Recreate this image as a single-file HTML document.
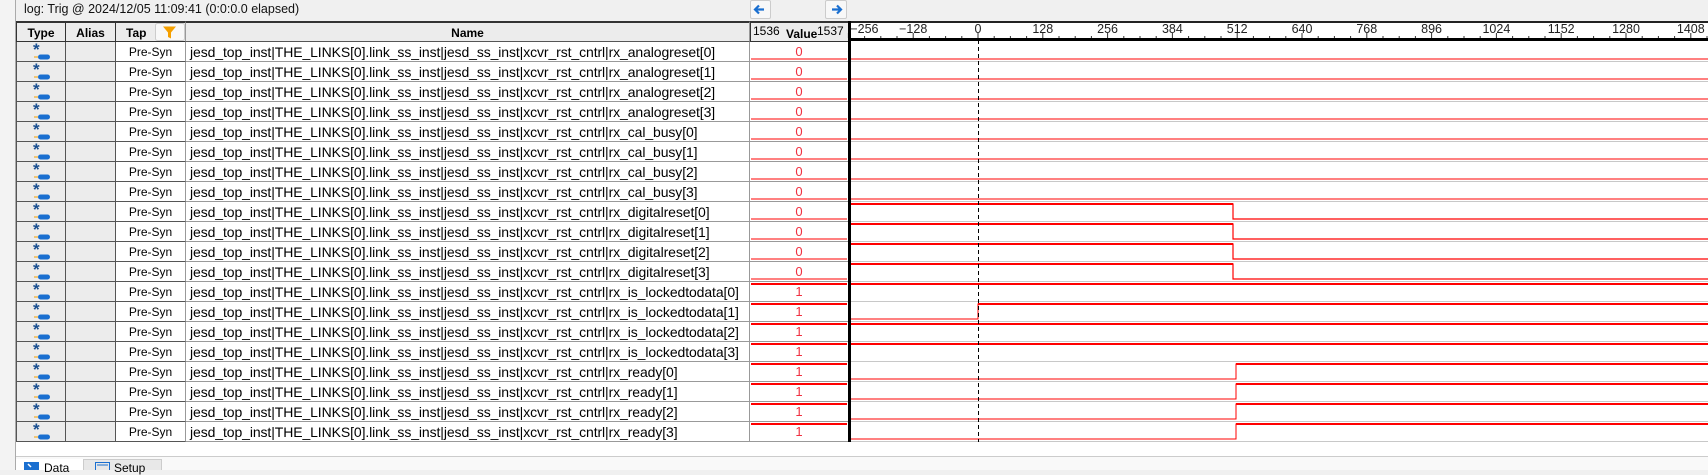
<!DOCTYPE html>
<html><head><meta charset="utf-8"><style>
*{margin:0;padding:0;box-sizing:border-box}
body{width:1708px;height:470px;overflow:hidden;background:#f0f0f0;font-family:"Liberation Sans","DejaVu Sans",sans-serif;position:relative}
.a{position:absolute}
.row{position:absolute;left:16px;height:20px;width:1692px}
.c{position:absolute;top:0;height:20px;font-size:12px;line-height:20px;text-align:center}
.ty{left:0;width:50px;background:#ececec;border:1px solid #555;border-top:none}
.al{left:50px;width:50px;background:#ececec;border-bottom:1px solid #555;border-right:1px solid #555}
.tp{left:100px;width:70px;background:#fff;border-bottom:1px solid #555;border-right:1px solid #999}
.nm{left:170px;width:564px;background:#fff;border-bottom:1px solid #999;border-right:1px solid #999;text-align:left;padding-left:4px;font-size:14px;letter-spacing:-0.1px;white-space:nowrap;overflow:hidden}
.vl{left:734px;width:98px;background:#fff;border-bottom:1px solid #999;color:#f03040;font-size:13px}
.h{font-weight:bold;font-size:12px}
</style></head><body>
<div class="a" style="left:0;top:0;width:16px;height:470px;background:#f3f3f3;border-right:1px solid #aaa"></div>
<div class="a" style="left:24px;top:0;font-size:12.5px;line-height:18px;color:#111">log: Trig @ 2024/12/05 11:09:41 (0:0:0.0 elapsed)</div>
<div class="a" style="left:750px;top:0;width:21px;height:19px;background:#f8f8f8;border:1px solid #ccc;border-radius:2px"><svg width="19" height="17"><path d="M4 8.5h9M8 4.5l-4 4 4 4" stroke="#1a6fd0" stroke-width="2.2" fill="none"/></svg></div>
<div class="a" style="left:825px;top:0;width:22px;height:19px;background:#f8f8f8;border:1px solid #ccc;border-radius:2px"><svg width="20" height="17"><path d="M6 8.5h9M11 4.5l4 4-4 4" stroke="#1a6fd0" stroke-width="2.2" fill="none"/></svg></div>
<div class="a" style="left:16px;top:21px;width:1692px;height:435px;background:#fff"></div>
<!-- header -->
<div class="row" style="top:21px;height:21px">
 <div class="c h" style="left:0;width:50px;height:21px;background:#ececec;border:1px solid #333;border-top:2px solid #333">Type</div>
 <div class="c h" style="left:50px;width:50px;height:21px;background:#ececec;border:1px solid #333;border-left:none;border-top:2px solid #333">Alias</div>
 <div class="c h" style="left:100px;width:70px;height:21px;background:#ececec;border-bottom:1px solid #333;border-right:1px solid #999;border-top:2px solid #333;text-align:left;padding-left:10px">Tap</div>
 <div class="c h" style="left:170px;width:564px;height:21px;background:#ececec;border-bottom:1px solid #555;border-right:1px solid #999;border-top:2px solid #333">Name</div>
 <div class="c" style="left:734px;width:98px;height:21px;background:#ececec;border-bottom:1px solid #333;border-top:2px solid #333;border-left:1px solid #333;font-size:12px;line-height:14px;text-align:left"><span style="position:absolute;left:2px;top:1px">1536</span><b style="position:absolute;left:35px;top:4px">Value</b><span style="position:absolute;left:66px;top:1px">1537</span></div>
</div>
<svg class="a" style="left:155px;top:23px" width="30" height="18"><rect x="0.5" y="0.5" width="29" height="17" rx="2" fill="#f8f8f8" stroke="#ccc"/><path d="M8 3.5h13l-5 6v6l-3-1.5v-4.5z" fill="#f5a000"/></svg>
<div id="rows"></div>
<svg class="a" style="left:0;top:0" width="1708" height="470">
<g id="ruler"></g>
<g id="w"></g>
</svg>
<!-- bottom tabs -->
<div class="a" style="left:16px;top:456px;width:1692px;height:14px;background:#f9f9f9;border-top:1px solid #ccc"></div>
<div class="a" style="left:16px;top:459px;width:67px;height:11px;background:#fff"></div>
<svg class="a" style="left:24px;top:462px" width="16" height="8"><rect x="0" y="0" width="15" height="8" fill="#1a6fd0"/><path d="M4 2l3 3" stroke="#fff" stroke-width="1.5"/></svg>
<div class="a" style="left:44px;top:461px;font-size:12px">Data</div>
<div class="a" style="left:83px;top:459px;width:79px;height:11px;background:#e8e8e8;border:1px solid #ccc;border-bottom:none"></div>
<svg class="a" style="left:95px;top:462px" width="16" height="8"><rect x="0.5" y="0.5" width="14" height="8" fill="none" stroke="#1a6fd0"/><path d="M2 3h11" stroke="#1a6fd0"/></svg>
<div class="a" style="left:114px;top:461px;font-size:12px">Setup</div>
<script>
var names=["rx_analogreset[0]","rx_analogreset[1]","rx_analogreset[2]","rx_analogreset[3]","rx_cal_busy[0]","rx_cal_busy[1]","rx_cal_busy[2]","rx_cal_busy[3]","rx_digitalreset[0]","rx_digitalreset[1]","rx_digitalreset[2]","rx_digitalreset[3]","rx_is_lockedtodata[0]","rx_is_lockedtodata[1]","rx_is_lockedtodata[2]","rx_is_lockedtodata[3]","rx_ready[0]","rx_ready[1]","rx_ready[2]","rx_ready[3]"];
var h="",s="";
for(var i=0;i<20;i++){
 var y=42+i*20, v=(i>=12)?1:0;
 h+='<div class="row" style="top:'+y+'px"><div class="c ty"><svg width="48" height="19" style="position:absolute;left:0;top:0"><text x="16" y="13" font-size="17" font-weight="bold" fill="#1a4f90" font-family="Liberation Sans">*</text><rect x="21" y="12.5" width="12" height="5" rx="2.5" fill="#1a6fd0"/><path d="M17 15h4" stroke="#f5a000" stroke-width="1"/></svg></div><div class="c al"></div><div class="c tp">Pre-Syn</div><div class="c nm">jesd_top_inst|THE_LINKS[0].link_ss_inst|jesd_ss_inst|xcvr_rst_cntrl|'+names[i]+'</div><div class="c vl">'+v+'</div></div>';
 s+='<line x1="851" y1="'+(y+19.5)+'" x2="1708" y2="'+(y+19.5)+'" stroke="#c8c8c8"/>';
 var hi=y+2,lo=y+17;
 if(i<8) s+='<line x1="851" y1="'+lo+'" x2="1708" y2="'+lo+'" stroke="red"/>';
 else if(i<12) s+='<path d="M851 '+hi+'H1233V'+lo+'H1708" stroke="red" fill="none" stroke-width="1.2"/><line x1="851" y1="'+hi+'" x2="1233" y2="'+hi+'" stroke="red" stroke-width="2"/>';
 else if(i==13) s+='<path d="M851 '+lo+'H978V'+hi+'H1708" stroke="red" fill="none"/><line x1="978" y1="'+hi+'" x2="1708" y2="'+hi+'" stroke="red" stroke-width="2"/>';
 else if(i<16) s+='<line x1="851" y1="'+hi+'" x2="1708" y2="'+hi+'" stroke="red" stroke-width="2"/>';
 else s+='<path d="M851 '+lo+'H1236V'+hi+'H1708" stroke="red" fill="none"/><line x1="1236" y1="'+hi+'" x2="1708" y2="'+hi+'" stroke="red" stroke-width="2"/>';
 if(v==0) s+='<line x1="751" y1="'+lo+'" x2="847" y2="'+lo+'" stroke="red"/>';
 else s+='<line x1="751" y1="'+hi+'" x2="847" y2="'+hi+'" stroke="red" stroke-width="2"/>';
}
document.getElementById('rows').innerHTML=h;
s+='<line x1="849.5" y1="21" x2="849.5" y2="442" stroke="#000" stroke-width="3"/>';
s+='<line x1="978.5" y1="40" x2="978.5" y2="442" stroke="#000" stroke-dasharray="4,3"/>';
document.getElementById('w').innerHTML=s;
var r='<line x1="848" y1="22" x2="1708" y2="22" stroke="#222" stroke-width="2"/><line x1="848" y1="39.5" x2="1708" y2="39.5" stroke="#000" stroke-width="3"/>';
var px=64.8/128;
for(var t=-256;t<=1536;t+=32){var x=978+t*px;if(x>1708)break;var maj=(t%128==0);r+='<line x1="'+x+'" y1="'+(maj?33:36)+'" x2="'+x+'" y2="38" stroke="#333"/>';
 if(maj) r+='<text x="'+(x+(t==-256?16:0))+'" y="33" font-size="12.5" text-anchor="middle" font-family="Liberation Sans" fill="#222">'+(t<0?'\u2212'+(-t):t)+'</text>';}
document.getElementById('ruler').innerHTML=r;
</script>
</body></html>
